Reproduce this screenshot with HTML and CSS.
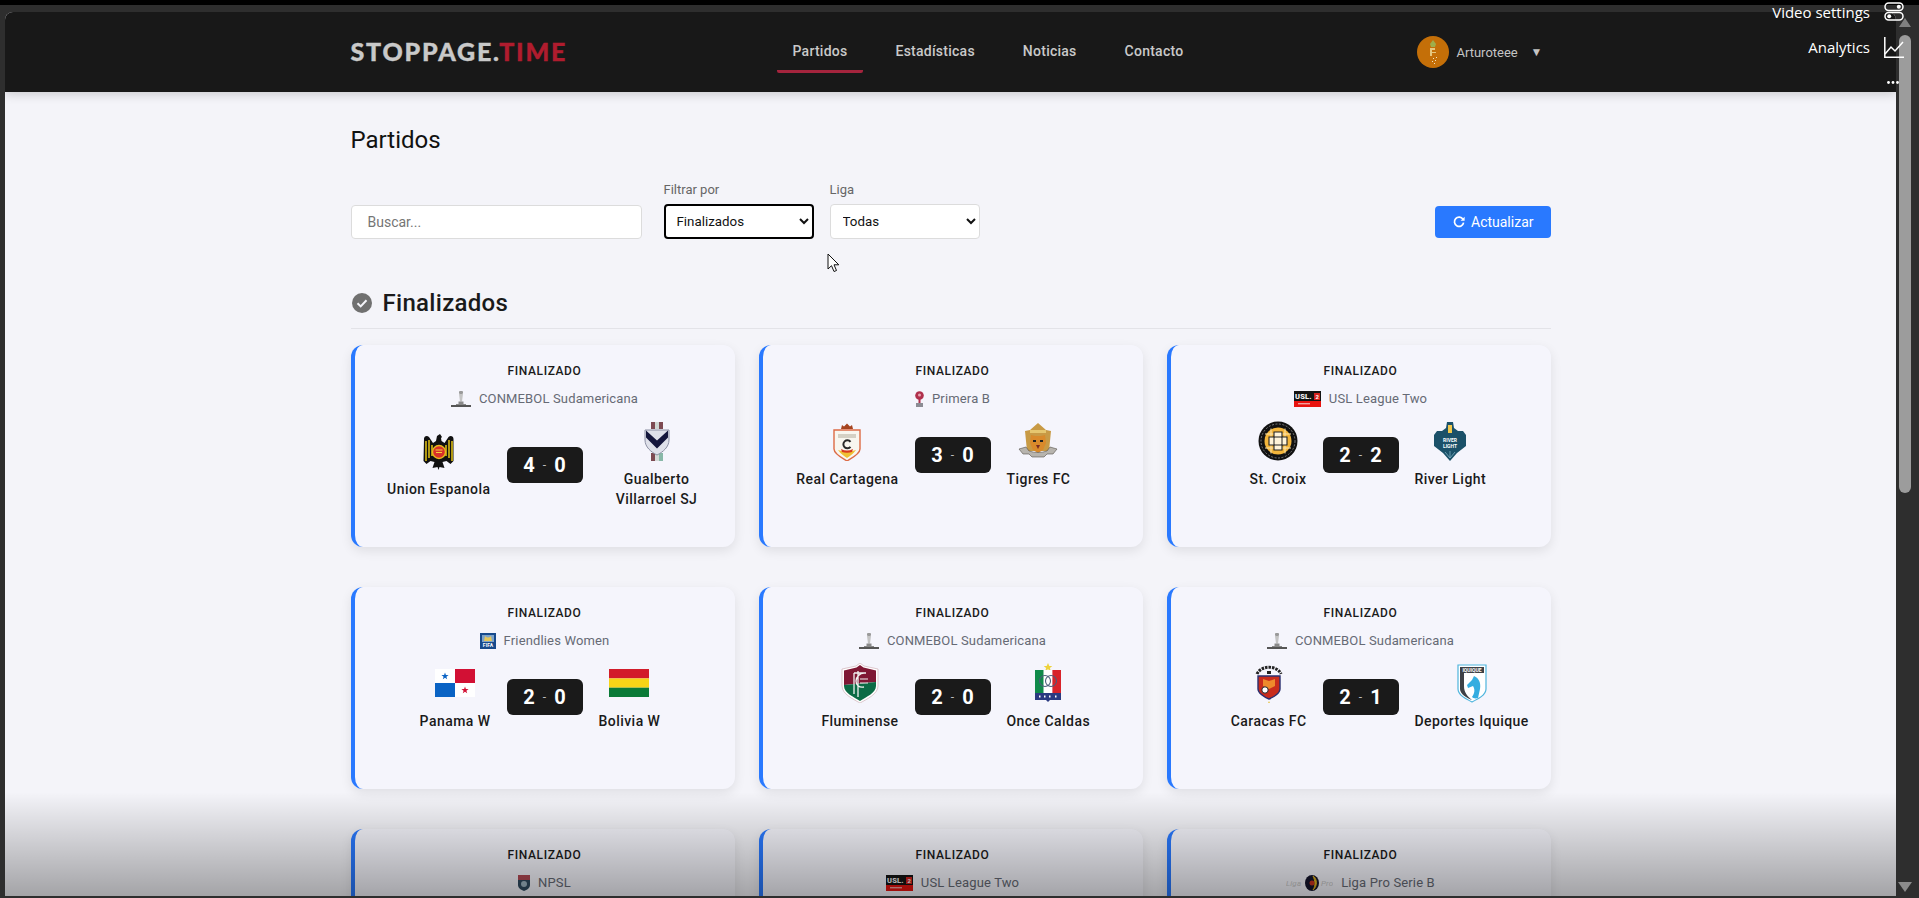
FILE: index.html
```html
<!DOCTYPE html>
<html lang="es">
<head>
<meta charset="utf-8">
<title>Stoppage.Time - Partidos</title>
<link rel="stylesheet" href="styles.css">
</head>
<body>
<svg class="defs" aria-hidden="true">
  <symbol id="cup" viewBox="0 0 20 16">
    <rect x="8" y="0" width="4" height="3" rx="1" fill="#9a9a9a"/>
    <path d="M8 3h4l-.6 4.500-.4 3h-2l-.4-3z" fill="#c4c4c4"/>
    <rect x="7.500" y="10.500" width="5" height="2.500" fill="#8a8a8a"/>
    <rect x="0" y="14" width="20" height="2" fill="#555"/>
    <rect x="5" y="13" width="10" height="1" fill="#888"/>
  </symbol>
</svg>

<div class="topline"></div>
<div class="stage">
  <div class="window">
    <header class="site-header">
      <div class="header-inner">
        <a class="logo">STOPPAGE.<span class="logo-accent">TIME</span></a>
        <nav class="nav">
          <a class="nav-link is-active">Partidos</a>
          <a class="nav-link">Estadísticas</a>
          <a class="nav-link">Noticias</a>
          <a class="nav-link">Contacto</a>
        </nav>
        <div class="user">
          <svg class="avatar" viewBox="0 0 32 32">
            <circle cx="16" cy="16" r="16" fill="#c46f08"/>
            <path d="M16 4l3 4-1 3h-4l-1-3z" fill="#9fae4a"/>
            <path d="M13 12h5v2h-3v2h4v1h-4v3h-2z" fill="#e6c77e"/>
            <path d="M16 22h1v1h-1zM19 21h1v1h-1zM15 25h1v1h-1zM18 24h1v1h-1zM17 27h1v1h-1z" fill="#f1e2c0"/>
          </svg>
          <span class="user-name">Arturoteee</span>
          <span class="user-caret">▼</span>
        </div>
      </div>
    </header>

    <main class="main">
      <h1 class="page-title">Partidos</h1>

      <div class="toolbar">
        <input class="search" type="text" placeholder="Buscar...">
        <div class="field">
          <label class="field-label">Filtrar por</label>
          <select class="select is-focus"><option>Finalizados</option></select>
        </div>
        <div class="field">
          <label class="field-label">Liga</label>
          <select class="select"><option>Todas</option></select>
        </div>
        <button class="refresh" type="button">
          <svg class="refresh-icon" viewBox="0 0 12 12"><path d="M10 3.400A4.600 4.600 0 1 0 10.600 6.600" fill="none" stroke="#fff" stroke-width="1.700"/><path d="M11.600 .8v4H7.600z" fill="#fff"/></svg>
          Actualizar
        </button>
      </div>

      <h2 class="section-title">
        <svg class="section-icon" viewBox="0 0 20 20"><circle cx="10" cy="10" r="10" fill="#707070"/><path d="M5.500 10.200l3.200 3.200 5.800-6.200" fill="none" stroke="#f4f4f9" stroke-width="2"/></svg>
        Finalizados
      </h2>

      <div class="grid">

        <article class="card">
          <div class="status">FINALIZADO</div>
          <div class="league"><svg class="league-logo w20"><use href="#cup"/></svg>CONMEBOL Sudamericana</div>
          <div class="match">
            <div class="team team-home">
              <svg class="crest" viewBox="0 0 40 40">
                <path d="M5 8c0-3 3-4 5-2l4 6 3-2 1-5 3-2 2 3-1 1 .5 3 3 2 4-6c2-2 5-1 5 2v22l-3 3-4-3-4 1 2 6-5-1-1 3-1-3-5 1 2-6-4-1-4 3-3-3z" fill="#111"/>
                <path d="M7 10v20M10 9v18M13 14v11M27 14v11M30 9v18M33 10v20" stroke="#d9bb16" stroke-width="1.600"/>
                <circle cx="20" cy="21" r="6.500" fill="#d9302a" stroke="#e8b81c" stroke-width="1.400"/>
                <path d="M16.500 18.500h7v1h-7zM17 21h6v1h-6z" fill="#f4d23c"/>
              </svg>
              <div class="team-name">Union Espanola</div>
            </div>
            <div class="score"><b>4</b><i>-</i><b>0</b></div>
            <div class="team team-away">
              <svg class="crest" viewBox="0 0 40 40">
                <path d="M14 1h4v7h-4zM22 1h4v7h-4z" fill="#7d4a52"/>
                <path d="M18 1h4v7h-4z" fill="#cfd6d2"/>
                <path d="M14 32h4v8h-4z" fill="#7d4a52"/><path d="M22 32h4v8h-4z" fill="#88b8a8"/><path d="M18 32h4v8h-4z" fill="#d5d9d6"/>
                <path d="M8 9h24v10c0 7-6 12-12 15-6-3-12-8-12-15z" fill="#dfe1ea" stroke="#8b8fa3"/>
                <path d="M9 9.500l11 10 11-10v7l-11 11-11-11z" fill="#15173d"/>
              </svg>
              <div class="team-name">Gualberto Villarroel SJ</div>
            </div>
          </div>
        </article>

        <article class="card">
          <div class="status">FINALIZADO</div>
          <div class="league"><svg class="league-logo w9" viewBox="0 0 9 16"><circle cx="4.500" cy="4.500" r="4.300" fill="#b0304c"/><path d="M3.500 8h2v4h-2z" fill="#b0304c"/><rect x="1" y="12" width="7" height="4" fill="#8c8c94"/><circle cx="4.500" cy="4" r="1.500" fill="#e9a3b1"/></svg>Primera B</div>
          <div class="match">
            <div class="team team-home">
              <svg class="crest" viewBox="0 0 40 40">
                <path d="M15 4l2 1.500 3-3 3 3 2-1.500 1 4H14z" fill="#a5431f"/>
                <path d="M7 9h26v19c0 5-8 9-13 12-5-3-13-7-13-12z" fill="#f8f6ef" stroke="#dd6b45" stroke-width="1.400"/>
                <path d="M11 13h18v4H11z" fill="#d4d0c4"/>
                <path d="M23.500 20.800a4 4 0 1 0 0 5" fill="none" stroke="#2a2a2a" stroke-width="2"/>
                <path d="M11 29c3 4 6 6 9 8 3-2 6-4 9-8-6 2-12 2-18 0z" fill="#efc034"/>
                <path d="M14 28c4 2 8 2 12 0l-1 3c-3 1-7 1-10 0z" fill="#d8391f"/>
              </svg>
              <div class="team-name">Real Cartagena</div>
            </div>
            <div class="score"><b>3</b><i>-</i><b>0</b></div>
            <div class="team team-away">
              <svg class="crest" viewBox="0 0 40 40">
                <path d="M12 9l8-7 8 7 5 1-2 20H9L7 10z" fill="#c89a45"/>
                <path d="M12 9h16v3H12z" fill="#e6c66e"/>
                <path d="M13 14l4 1h6l4-1 1 8-3 7-5 3-5-3-3-7z" fill="#d98a2b"/>
                <path d="M15 19h3v2h-3zM22 19h3v2h-3z" fill="#222"/><path d="M18 24h4l-2 4z" fill="#7a2b20"/>
                <path d="M1 28l7-2 3 4c6 2 12 2 18 0l3-4 7 2-4 5H29l-3 3H14l-3-3H5z" fill="#b7b4ae" stroke="#55504a" stroke-width=".6"/>
              </svg>
              <div class="team-name">Tigres FC</div>
            </div>
          </div>
        </article>

        <article class="card">
          <div class="status">FINALIZADO</div>
          <div class="league">
            <svg class="league-logo w27" viewBox="0 0 27 16">
              <rect width="27" height="16" fill="#e8130f"/>
              <rect width="27" height="10" fill="#141414"/>
              <text class="usl-text" x="1" y="8.300">USL.</text>
              <rect x="20" y="2" width="6" height="7" fill="#d3211c"/>
              <text class="usl-num" x="21.500" y="7.800">2</text>
              <rect x="4" y="12" width="12" height="1.400" fill="#f3a09d"/>
            </svg>USL League Two</div>
          <div class="match">
            <div class="team team-home">
              <svg class="crest" viewBox="0 0 40 40">
                <circle cx="20" cy="20" r="19.500" fill="#111"/>
                <circle cx="20" cy="20" r="17" fill="none" stroke="#bbb" stroke-width=".6" stroke-dasharray="2 1.500"/>
                <circle cx="20" cy="20" r="13.500" fill="#f3b53a"/>
                <path d="M13 7.500v25M27 7.500v25M7 13h26M7 27h26" stroke="#fbe4ad" stroke-width="1"/>
                <path d="M16 11h8v5h5v8h-5v5h-8v-5h-5v-8h5z" fill="#fff4d9" stroke="#222" stroke-width="1.100"/>
                <rect x="16" y="16" width="8" height="8" fill="none" stroke="#222"/>
              </svg>
              <div class="team-name">St. Croix</div>
            </div>
            <div class="score"><b>2</b><i>-</i><b>2</b></div>
            <div class="team team-away">
              <svg class="crest" viewBox="0 0 40 40">
                <path d="M17 1h6l1 6 4 3h5l3 4v11l-9 7-7 8-7-8-9-7V14l3-4h5l4-3z" fill="#1b5169"/>
                <rect x="18" y="4" width="4" height="8" fill="#f2c94c"/>
                <text class="crest-text" x="20" y="21" text-anchor="middle">RIVER</text>
                <text class="crest-text" x="20" y="27" text-anchor="middle">LIGHT</text>
                <path d="M20 30v7M15 31l5 6 5-6" fill="none" stroke="#7fb0c2" stroke-width=".8"/>
              </svg>
              <div class="team-name">River Light</div>
            </div>
          </div>
        </article>

        <article class="card">
          <div class="status">FINALIZADO</div>
          <div class="league"><svg class="league-logo w16" viewBox="0 0 16 16"><rect width="16" height="16" fill="#174a8c"/><path d="M2 2h12v7H2z" fill="#7ea3c9"/><path d="M5 3c2 2 4 2 6 0l1 5H4z" fill="#e5c65a"/><text class="fifa-text" x="8" y="14" text-anchor="middle">FIFA</text></svg>Friendlies Women</div>
          <div class="match">
            <div class="team team-home">
              <svg class="crest" viewBox="0 0 40 40">
                <rect x="0" y="6" width="20" height="14" fill="#fff"/>
                <rect x="20" y="6" width="20" height="14" fill="#d21034"/>
                <rect x="0" y="20" width="20" height="14" fill="#0a63c4"/>
                <rect x="20" y="20" width="20" height="14" fill="#fff"/>
                <path d="M10 9.500l.9 2.600h2.700l-2.200 1.600.8 2.600-2.200-1.600-2.200 1.600.8-2.600-2.200-1.600h2.700z" fill="#0a63c4"/>
                <path d="M30 23.500l.9 2.600h2.700l-2.200 1.600.8 2.600-2.200-1.600-2.200 1.600.8-2.600-2.200-1.600h2.700z" fill="#d21034"/>
              </svg>
              <div class="team-name">Panama W</div>
            </div>
            <div class="score"><b>2</b><i>-</i><b>0</b></div>
            <div class="team team-away">
              <svg class="crest" viewBox="0 0 40 40">
                <rect x="0" y="6" width="40" height="9.400" fill="#d21c2a"/>
                <rect x="0" y="15.400" width="40" height="9.300" fill="#f7d417"/>
                <rect x="0" y="24.700" width="40" height="9.300" fill="#0a7a37"/>
              </svg>
              <div class="team-name">Bolivia W</div>
            </div>
          </div>
        </article>

        <article class="card">
          <div class="status">FINALIZADO</div>
          <div class="league"><svg class="league-logo w20"><use href="#cup"/></svg>CONMEBOL Sudamericana</div>
          <div class="match">
            <div class="team team-home">
              <svg class="crest" viewBox="0 0 40 40">
                <path d="M20 0l4 3 14 3v17c0 8-11 13-18 17C13 36 2 31 2 23V6l14-3z" fill="#fff" stroke="#c9a6ad" stroke-width=".6"/>
                <path d="M20 2l3.500 2.500L36 7.500V19L4 22V7.500l12.500-3z" fill="#7f1734"/>
                <path d="M4 22l32-3v4c0 7-10 11-16 15C14 34 4 30 4 23z" fill="#0c6b45"/>
                <path d="M14 10h12M14 10v21M18 8v26M24 10c-4 0-8 4-8 8s3 7 8 6" fill="none" stroke="#f2f2f2" stroke-width="1.300"/>
                <path d="M20 16h8M20 20h8" stroke="#f2f2f2" stroke-width="1"/>
              </svg>
              <div class="team-name">Fluminense</div>
            </div>
            <div class="score"><b>2</b><i>-</i><b>0</b></div>
            <div class="team team-away">
              <svg class="crest" viewBox="0 0 40 40">
                <path d="M20 0l1.300 3h3l-2.400 2 .9 3-2.800-1.800L17.200 8l.9-3-2.400-2h3z" fill="#eed23c"/>
                <rect x="7" y="7" width="8.700" height="23" fill="#0f8a4a"/>
                <rect x="15.700" y="7" width="8.700" height="23" fill="#fff"/>
                <rect x="24.400" y="7" width="8.600" height="23" fill="#d8232a"/>
                <circle cx="17" cy="18" r="5.500" fill="none" stroke="#4a5d7a" stroke-width="1.100"/>
                <circle cx="23" cy="18" r="5.500" fill="none" stroke="#4a5d7a" stroke-width="1.100"/>
                <path d="M7 30h26v7H22l-2 2-2-2H7z" fill="#2b3a80"/>
                <path d="M11 33.500h1.500M16 33.500h1.500M21 33.500h1.500M27 33.500h1.500" stroke="#fff" stroke-width="2"/>
              </svg>
              <div class="team-name">Once Caldas</div>
            </div>
          </div>
        </article>

        <article class="card">
          <div class="status">FINALIZADO</div>
          <div class="league"><svg class="league-logo w20"><use href="#cup"/></svg>CONMEBOL Sudamericana</div>
          <div class="match">
            <div class="team team-home">
              <svg class="crest" viewBox="0 0 40 40">
                <path d="M8 11C12 2 28 2 32 11" fill="none" stroke="#222" stroke-width="3" stroke-dasharray="2.500 1"/>
                <path d="M18 8h4v3h-4z" fill="#222"/>
                <path d="M9 13h22v13c0 4-6 8-11 10-5-2-11-6-11-10z" fill="#c92c1c" stroke="#2a2f70" stroke-width="1.400"/>
                <path d="M14 16l6 2 6-2v7l-6 3-6-3z" fill="#ee8a2c"/>
                <circle cx="16" cy="27" r="3.200" fill="#fff" stroke="#222"/>
                <path d="M20 38l1 2h-2z" fill="#e6c54a"/>
              </svg>
              <div class="team-name">Caracas FC</div>
            </div>
            <div class="score"><b>2</b><i>-</i><b>1</b></div>
            <div class="team team-away">
              <svg class="crest" viewBox="0 0 40 40">
                <path d="M6 2h28v24c0 6-8 10-14 13C14 36 6 32 6 26z" fill="#fff" stroke="#4fb5dd" stroke-width="1.200"/>
                <path d="M8 4h24v6H8z" fill="#3e4146"/>
                <path d="M8 10v16c0 5 7 9 12 11-5-4-8-8-8-14V10z" fill="#3e4146"/>
                <path d="M22 13c5 2 7 7 6 13l-2 9c-3 1-5 0-6-1 3-4 3-8 1-11l-5 2-1-3 5-5z" fill="#34ade0"/>
                <text class="crest-text" x="20" y="9" text-anchor="middle">IQUIQUE</text>
              </svg>
              <div class="team-name">Deportes Iquique</div>
            </div>
          </div>
        </article>

        <article class="card">
          <div class="status">FINALIZADO</div>
          <div class="league"><svg class="league-logo w12" viewBox="0 0 12 16"><path d="M0 0h12v10c0 3-3 5-6 6-3-1-6-3-6-6z" fill="#2f4a60"/><path d="M0 0h12v5H0z" fill="#b34a55"/><circle cx="6" cy="9" r="3" fill="#9fb6c4"/></svg>NPSL</div>
        </article>

        <article class="card">
          <div class="status">FINALIZADO</div>
          <div class="league">
            <svg class="league-logo w27" viewBox="0 0 27 16">
              <rect width="27" height="16" fill="#e8130f"/>
              <rect width="27" height="10" fill="#141414"/>
              <text class="usl-text" x="1" y="8.300">USL.</text>
              <rect x="20" y="2" width="6" height="7" fill="#d3211c"/>
              <text class="usl-num" x="21.500" y="7.800">2</text>
              <rect x="4" y="12" width="12" height="1.400" fill="#f3a09d"/>
            </svg>USL League Two</div>
        </article>

        <article class="card">
          <div class="status">FINALIZADO</div>
          <div class="league"><svg class="league-logo w47" viewBox="0 0 47 16"><text class="liga-text" x="0" y="11">Liga</text><ellipse cx="26" cy="8" rx="7" ry="8" fill="#14142c"/><path d="M27 1c4 2 5 10 0 14 3-4 2-10 0-14z" fill="#e2b21c" stroke="#e2b21c"/><circle cx="26" cy="8" r="2.500" fill="#c8321f"/><text class="liga-text" x="35" y="11">Pro</text></svg>Liga Pro Serie B</div>
        </article>

      </div>
      <div class="fade"></div>
    </main>
  </div>

  <div class="scrollbar">
    <div class="scroll-up"></div>
    <div class="scroll-thumb"></div>
    <div class="scroll-down"></div>
  </div>
</div>

<div class="video-menu">
  <div class="video-row video-row-settings">
    <span>Video settings</span>
    <svg class="video-icon" viewBox="0 0 20 19"><rect x="1" y="1" width="18" height="7.500" rx="3.700" fill="none" stroke="#fff" stroke-width="1.500"/><rect x="1" y="10.500" width="18" height="7.500" rx="3.700" fill="none" stroke="#fff" stroke-width="1.500"/><circle cx="14.800" cy="4.700" r="2" fill="#fff"/><circle cx="5.200" cy="14.200" r="2" fill="#fff"/></svg>
  </div>
  <div class="video-row video-row-analytics">
    <span>Analytics</span>
    <svg class="video-icon chart" viewBox="0 0 20 21"><path d="M.8 0v20.200H20" fill="none" stroke="#fff" stroke-width="1.500"/><path d="M1 17l6-7 4 4 8-9" fill="none" stroke="#fff" stroke-width="1.500"/></svg>
  </div>
  <svg class="video-more" viewBox="0 0 12 3"><circle cx="1.500" cy="1.500" r="1.400" fill="#fff"/><circle cx="6" cy="1.500" r="1.400" fill="#fff"/><circle cx="10.500" cy="1.500" r="1.400" fill="#fff"/></svg>
</div>

<svg class="cursor" viewBox="0 0 13 20"><path d="M1 1v15l3.500-3.300L7 18.500l2.500-1-2.500-5.700h4.800z" fill="#fff" stroke="#111" stroke-width="1"/></svg>
</body>
</html>
```

FILE: styles.css
```css
* { box-sizing: border-box; }
html, body { margin: 0; height: 100%; }
body {
  width: 1919px;
  height: 898px;
  overflow: hidden;
  background: #2e2e2e;
  font-family: Roboto, "Liberation Sans", sans-serif;
  color: #1a1a1a;
  position: relative;
}
.defs { position: absolute; width: 0; height: 0; }
.usl-text { font-family: Roboto, sans-serif; font-size: 7.500px; font-weight: 900; fill: #f2f2f2; }
.usl-num { font-family: Roboto, sans-serif; font-size: 6px; font-weight: 700; fill: #fff; }
.fifa-text { font-family: Roboto, sans-serif; font-size: 5px; font-weight: 700; fill: #fff; }
.liga-text { font-family: Roboto, sans-serif; font-size: 8px; font-style: italic; fill: #c8c8c8; }
.topline { height: 5px; background: #000; }
.stage { display: flex; height: 891px; padding-left: 5px; }

.window {
  flex: 1;
  margin-top: 7px;
  display: flex;
  flex-direction: column;
  overflow: hidden;
  border-radius: 8px 8px 0 0;
  background: #f4f4f9;
}

/* header */
.site-header {
  flex: none;
  height: 80px;
  background: #181818;
  box-shadow: 0 2px 10px rgba(0, 0, 0, .18);
  position: relative;
  z-index: 2;
}
.header-inner {
  width: 1200px;
  height: 100%;
  margin: 0 auto;
  display: grid;
  grid-template-columns: 426px auto 1fr;
  align-items: center;
}
.logo {
  font-family: Lato, sans-serif;
  font-weight: 900;
  font-size: 25px;
  line-height: 24px;
  letter-spacing: 1.800px;
  -webkit-text-stroke: .4px currentColor;
  color: #c9c9c9;
  position: relative;
  top: -1px;
}
.logo-accent { color: #b01c2e; }
.nav { display: flex; gap: 16px; }
.nav-link {
  padding: 10px 16px 9px;
  border-bottom: 3px solid transparent;
  border-radius: 0 0 2px 2px;
  font-size: 14px;
  font-weight: 500;
  line-height: 20px;
  letter-spacing: .25px;
  color: #c9c9c9;
}
.nav-link.is-active { border-bottom-color: #a5243d; }
.user {
  justify-self: end;
  display: flex;
  align-items: center;
  padding-right: 10px;
  font-size: 13px;
  color: #c4c4c4;
}
.avatar { width: 32px; height: 32px; margin-right: 8px; flex: none; }
.user-name { width: 60px; white-space: nowrap; }
.user-caret { width: 10px; margin-left: 14px; font-size: 12px; text-align: center; }

/* main */
.main {
  flex: 1;
  position: relative;
  overflow: hidden;
  padding-top: 34px;
}
.page-title,
.toolbar,
.section-title,
.grid { width: 1200px; margin-left: auto; margin-right: auto; }
.page-title {
  margin-top: 0;
  margin-bottom: 28px;
  font-size: 24px;
  font-weight: 400;
  line-height: 28px;
  color: #111;
}
.toolbar { display: flex; align-items: flex-end; gap: 16px; }
.search {
  width: 291px;
  height: 34px;
  margin-right: 6px;
  padding: 0 16px;
  border: 1px solid #dcdcdc;
  border-radius: 4px;
  background: #fff;
  font-family: inherit;
  font-size: 14px;
}
.search::placeholder { color: #757575; opacity: 1; }
.field { display: flex; flex-direction: column; }
.field-label {
  font-size: 13px;
  line-height: 16px;
  margin-bottom: 6px;
  color: #666;
}
.select {
  width: 150px;
  height: 35px;
  padding: 0 8px;
  border: 1px solid #dcdcdc;
  border-radius: 4px;
  background: #fff;
  font-family: inherit;
  font-size: 13.330px;
  color: #111;
}
.select.is-focus { border: 2px solid #000; padding: 0 7px; }
.refresh {
  margin-left: auto;
  margin-bottom: 1px;
  height: 32px;
  padding: 0 17px 0 18px;
  display: flex;
  align-items: center;
  gap: 6px;
  border: 0;
  border-radius: 4px;
  background: #2979ff;
  color: #fff;
  font-family: inherit;
  font-size: 14px;
}
.refresh-icon { width: 12px; height: 12px; }
.section-title {
  display: flex;
  align-items: center;
  gap: 11px;
  margin-top: 48px;
  margin-bottom: 16px;
  padding: 0 0 9px 1px;
  border-bottom: 1px solid #e3e3e8;
  font-size: 24px;
  font-weight: 500;
  line-height: 32px;
  letter-spacing: .3px;
  color: #1a1a1a;
}
.section-icon { width: 20px; height: 20px; }

/* cards */
.grid {
  display: grid;
  grid-template-columns: repeat(3, 384px);
  column-gap: 24px;
  row-gap: 40px;
}
.card {
  min-height: 202px;
  padding: 20px 20px 18px;
  border-left: 4px solid #2979ff;
  border-radius: 12px;
  background: #f5f5fc;
  box-shadow: 0 4px 12px rgba(0, 0, 0, .09);
}
.status {
  font-size: 12px;
  font-weight: 500;
  line-height: 12px;
  letter-spacing: .6px;
  text-align: center;
  color: #1a1a1a;
}
.league {
  display: flex;
  justify-content: center;
  align-items: center;
  gap: 8px;
  height: 16px;
  margin-top: 13px;
  font-size: 13px;
  letter-spacing: .15px;
  color: #666a75;
}
.league-logo { height: 16px; flex: none; margin-top: 2px; }
.w9 { width: 9px; }
.w12 { width: 12px; }
.w16 { width: 16px; }
.w20 { width: 20px; }
.w27 { width: 27px; }
.w47 { width: 47px; }
.match {
  display: grid;
  grid-template-columns: 1fr auto 1fr;
  column-gap: 16px;
  align-items: center;
  margin-top: 15px;
}
.team {
  display: flex;
  flex-direction: column;
  align-items: center;
  text-align: center;
}
.team-home { justify-self: end; }
.team-away { justify-self: start; }
.crest { width: 40px; height: 40px; display: block; margin-bottom: 8px; }
.crest-text { font-family: Roboto, sans-serif; font-size: 5px; font-weight: 700; fill: #fff; }
.team-name {
  font-size: 14px;
  font-weight: 500;
  line-height: 20px;
  letter-spacing: .45px;
  color: #1a1a1a;
}
.score {
  width: 76px;
  height: 36px;
  display: flex;
  justify-content: center;
  align-items: center;
  gap: 8px;
  border-radius: 6px;
  background: #1a1a1a;
  color: #fff;
  font-size: 20px;
  line-height: 1;
}
.score b { font-weight: 700; }
.score i { font-style: normal; font-size: 12px; color: #bbb; }

.fade {
  position: absolute;
  left: 0;
  right: 0;
  bottom: 0;
  height: 104px;
  background: linear-gradient(rgba(0, 0, 0, 0), rgba(0, 0, 0, .33));
  z-index: 3;
}

/* scrollbar */
.scrollbar {
  flex: none;
  width: 23px;
  padding: 13px 8px 4px 3px;
  display: flex;
  flex-direction: column;
  align-items: center;
  background: #2e2e2e;
}
.scroll-up {
  flex: none;
  width: 0;
  height: 0;
  border-left: 6px solid transparent;
  border-right: 6px solid transparent;
  border-bottom: 9px solid #7f7f7f;
}
.scroll-thumb {
  flex: none;
  width: 12px;
  height: 458px;
  margin-top: 8px;
  border-radius: 6px;
  background: #9c9c9c;
}
.scroll-down {
  flex: none;
  margin-top: auto;
  width: 0;
  height: 0;
  border-left: 7px solid transparent;
  border-right: 7px solid transparent;
  border-top: 10px solid #8b8b8b;
}

/* video overlay */
.video-menu {
  position: absolute;
  top: 1px;
  right: 15px;
  width: 160px;
  color: #fff;
  font-family: "Open Sans", sans-serif;
  font-size: 15px;
  z-index: 5;
}
.video-row { display: flex; justify-content: flex-end; align-items: center; }
.video-row-settings { height: 21px; }
.video-row-analytics { height: 22px; margin-top: 14px; }
.video-icon { width: 20px; height: 19px; margin-left: 14px; flex: none; }
.video-icon.chart { height: 21px; }
.video-more {
  position: absolute;
  top: 80px;
  right: 5px;
  width: 12px;
  height: 3px;
}
.cursor {
  position: absolute;
  left: 827px;
  top: 253px;
  width: 13px;
  height: 20px;
  z-index: 6;
}
```
